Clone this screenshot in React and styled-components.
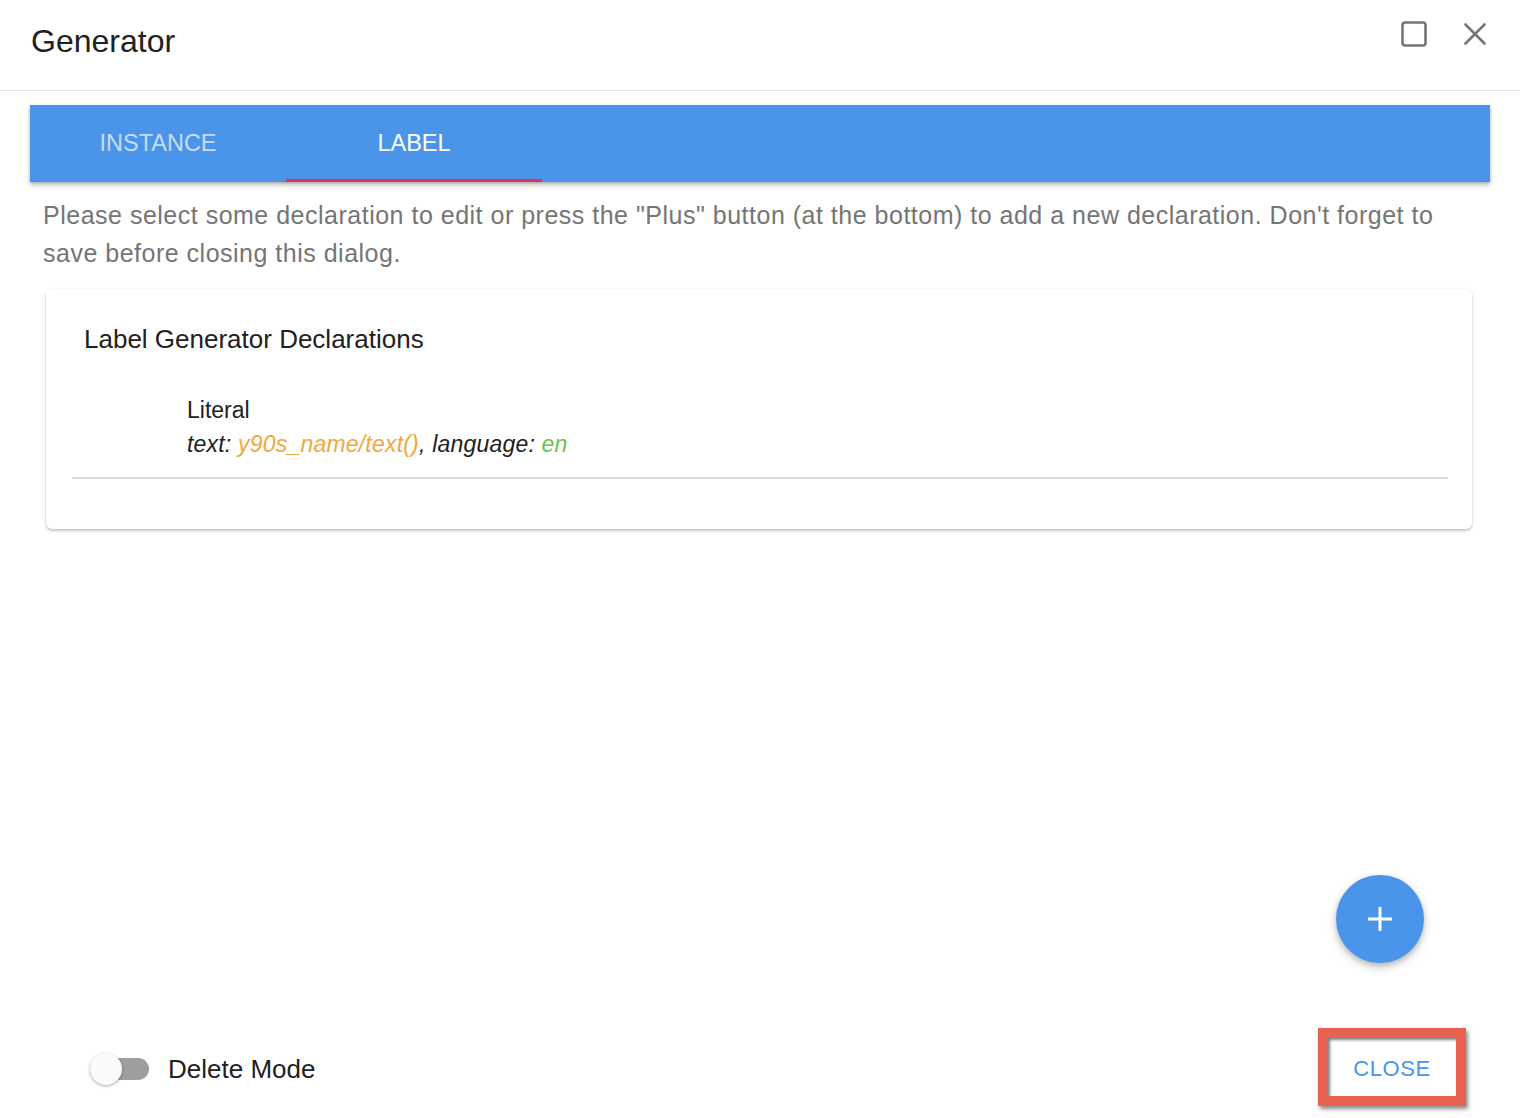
import React, { useState } from "react";
import styled, { createGlobalStyle } from "styled-components";

const GlobalStyle = createGlobalStyle`
  html, body {
    margin: 0;
    padding: 0;
    background: #ffffff;
  }
  body {
    font-family: "Liberation Sans", Arial, sans-serif;
  }
`;

const Dialog = styled.div`
  width: 1520px;
  height: 1118px;
  display: flex;
  flex-direction: column;
  background: #ffffff;
  overflow: hidden;
`;

const Header = styled.div`
  height: 91px;
  display: flex;
  align-items: center;
  justify-content: space-between;
  padding: 0 34px 8px 31px;
  box-sizing: border-box;
  border-bottom: 1px solid #e0e0e0;
  flex-shrink: 0;
`;

const Title = styled.h1`
  margin: 0;
  font-size: 32px;
  font-weight: 400;
  color: #212121;
`;

const HeaderActions = styled.div`
  display: flex;
  align-items: center;
  gap: 37px;
  margin-top: -14px;
`;

const IconButton = styled.button`
  border: none;
  background: none;
  padding: 0;
  cursor: pointer;
  display: flex;
  color: #757575;
`;

const Body = styled.div`
  flex: 1;
  display: flex;
  flex-direction: column;
  padding: 14px 30px 0;
  min-height: 0;
`;

const TabBar = styled.div`
  height: 77px;
  display: flex;
  background: #4a94ea;
  box-shadow: 0 3px 5px rgba(0, 0, 0, 0.25), 0 1px 2px rgba(0, 0, 0, 0.15);
  flex-shrink: 0;
`;

const Tab = styled.button`
  width: 256px;
  border: none;
  background: none;
  position: relative;
  cursor: pointer;
  font-family: "Liberation Sans", Arial, sans-serif;
  font-size: 23.5px;
  padding: 0;
  color: ${({ $active }) => ($active ? "#ffffff" : "rgba(255, 255, 255, 0.7)")};

  &::after {
    content: "";
    position: absolute;
    left: 0;
    right: 0;
    bottom: 0;
    height: 3px;
    background: ${({ $active }) => ($active ? "#e5305d" : "transparent")};
  }
`;

const Hint = styled.p`
  margin: 14px 30px 0 13px;
  font-size: 25px;
  letter-spacing: 0.5px;
  line-height: 38px;
  color: #757575;
`;

const Card = styled.div`
  margin: 17px 18px 0 16px;
  padding: 35px 24px 50px 26px;
  border-radius: 6px;
  background: #ffffff;
  box-shadow: 0 2px 3px rgba(0, 0, 0, 0.22), 0 0 2px rgba(0, 0, 0, 0.08);
`;

const CardTitle = styled.h2`
  margin: 0 0 0 12px;
  font-size: 26px;
  font-weight: 400;
  color: #212121;
`;

const DeclarationItem = styled.div`
  margin-top: 38px;
  padding: 0 0 16px 115px;
  border-bottom: 2px solid #dcdcdc;
`;

const DeclarationType = styled.div`
  font-size: 23px;
  line-height: 34px;
  color: #212121;
`;

const DeclarationParams = styled.div`
  font-size: 23px;
  letter-spacing: 0.2px;
  line-height: 34px;
  font-style: italic;
  color: #212121;
`;

const Value = styled.span`
  color: ${({ $tone }) => ($tone === "lang" ? "#6cc24a" : "#f2a73b")};
`;

const Spacer = styled.div`
  flex: 1;
`;

const FabRow = styled.div`
  display: flex;
  justify-content: flex-end;
  padding-right: 66px;
  margin-bottom: 57px;
`;

const Fab = styled.button`
  width: 88px;
  height: 88px;
  border-radius: 50%;
  border: none;
  background: #4a94ea;
  color: #ffffff;
  display: flex;
  align-items: center;
  justify-content: center;
  cursor: pointer;
  box-shadow: 0 4px 10px rgba(0, 0, 0, 0.22), 0 2px 4px rgba(0, 0, 0, 0.12);
`;

const Footer = styled.div`
  height: 98px;
  display: flex;
  align-items: center;
  justify-content: space-between;
  padding: 0 54px 0 90px;
  flex-shrink: 0;
`;

const ToggleLabel = styled.label`
  display: flex;
  align-items: center;
  gap: 19px;
  font-size: 26px;
  color: #212121;
  cursor: pointer;
`;

const Track = styled.span`
  position: relative;
  width: 59px;
  height: 22px;
  border-radius: 11px;
  background: ${({ $on }) => ($on ? "#9fc6f4" : "#9e9e9e")};
`;

const Thumb = styled.span`
  position: absolute;
  top: -5px;
  left: ${({ $on }) => ($on ? "27px" : "0")};
  width: 32px;
  height: 32px;
  border-radius: 50%;
  background: ${({ $on }) => ($on ? "#4a94ea" : "#fafafa")};
  box-shadow: 0 1px 3px rgba(0, 0, 0, 0.35);
`;

const CloseButton = styled.button`
  width: 148px;
  height: 78px;
  margin-top: -4px;
  padding: 3px 0 0;
  border: 10px solid #e8634f;
  background: #ffffff;
  box-sizing: border-box;
  font-family: "Liberation Sans", Arial, sans-serif;
  font-size: 22px;
  letter-spacing: 0.6px;
  color: #4a94ea;
  cursor: pointer;
  box-shadow: 2px 3px 4px rgba(0, 0, 0, 0.45), inset 2px 2px 3px rgba(0, 0, 0, 0.5);
`;

export default function App() {
  const [tab, setTab] = useState("label");
  const [deleteMode, setDeleteMode] = useState(false);

  return (
    <>
      <GlobalStyle />
      <Dialog>
        <Header>
          <Title>Generator</Title>
          <HeaderActions>
            <IconButton aria-label="maximize">
              <svg width="26" height="26" viewBox="0 0 26 26">
                <rect x="1.5" y="1.5" width="23" height="23" rx="2.5" fill="none" stroke="currentColor" strokeWidth="2.6" />
              </svg>
            </IconButton>
            <IconButton aria-label="close">
              <svg width="22" height="22" viewBox="0 0 22 22">
                <path d="M1.5 1.5 L20.5 20.5 M20.5 1.5 L1.5 20.5" stroke="currentColor" strokeWidth="2.6" strokeLinecap="round" />
              </svg>
            </IconButton>
          </HeaderActions>
        </Header>

        <Body>
          <TabBar>
            <Tab $active={tab === "instance"} onClick={() => setTab("instance")}>
              INSTANCE
            </Tab>
            <Tab $active={tab === "label"} onClick={() => setTab("label")}>
              LABEL
            </Tab>
          </TabBar>

          <Hint>
            Please select some declaration to edit or press the "Plus" button (at the bottom) to add a new
            declaration. Don't forget to save before closing this dialog.
          </Hint>

          <Card>
            <CardTitle>Label Generator Declarations</CardTitle>
            <DeclarationItem>
              <DeclarationType>Literal</DeclarationType>
              <DeclarationParams>
                text: <Value>y90s_name/text()</Value>, language: <Value $tone="lang">en</Value>
              </DeclarationParams>
            </DeclarationItem>
          </Card>

          <Spacer />

          <FabRow>
            <Fab aria-label="add declaration">
              <svg width="28" height="28" viewBox="0 0 28 28">
                <path d="M14 2 V26 M2 14 H26" stroke="currentColor" strokeWidth="3" />
              </svg>
            </Fab>
          </FabRow>
        </Body>

        <Footer>
          <ToggleLabel onClick={() => setDeleteMode(!deleteMode)}>
            <Track $on={deleteMode}>
              <Thumb $on={deleteMode} />
            </Track>
            Delete Mode
          </ToggleLabel>
          <CloseButton>CLOSE</CloseButton>
        </Footer>
      </Dialog>
    </>
  );
}
